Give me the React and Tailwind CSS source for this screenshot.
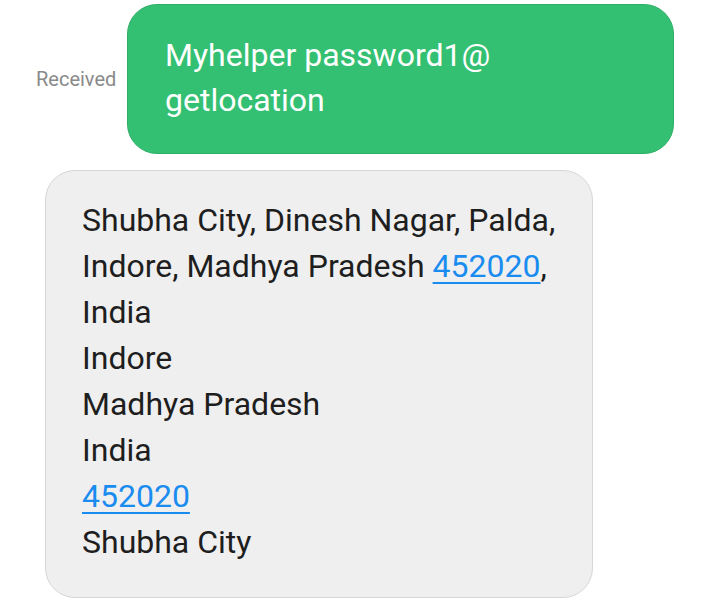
export default function App() {
    const lines = ['India', 'Indore', 'Madhya Pradesh', 'India'];

    return (
        <div className="w-[720px] h-[605px] bg-white overflow-hidden font-['Roboto',sans-serif]">
            {/* Incoming command */}
            <div className="flex items-center pt-[4px]">
                <span className="w-[127px] pl-[36px] text-[20px] text-[#8a8a8a] pb-[1px]">Received</span>
                <div className="w-[547px] h-[150px] rounded-[30px] bg-[#34c072] border border-[#2fae68] pl-[37px] pr-[30px] pt-[28px] text-[32px] leading-[45px] text-white">
                    Myhelper password1@
                    <br />
                    getlocation
                </div>
            </div>

            {/* Location reply */}
            <div className="pl-[45px] pt-[16px]">
                <div className="w-[548px] h-[428px] rounded-[30px] bg-[#efefef] border border-[#d6d6d6] pl-[36px] pr-[20px] pt-[26px] text-[32px] leading-[46px] text-[#1e1e1e]">
                    <div>Shubha City, Dinesh Nagar, Palda,</div>
                    <div>
                        Indore, Madhya Pradesh{' '}
                        <a href="#" className="text-[#1a8cf0] underline underline-offset-[5px] decoration-[2px]">452020</a>,
                    </div>
                    {lines.map((line, i) => (
                        <div key={i}>{line}</div>
                    ))}
                    <div>
                        <a href="#" className="text-[#1a8cf0] underline underline-offset-[5px] decoration-[2px]">452020</a>
                    </div>
                    <div>Shubha City</div>
                </div>
            </div>
        </div>
    );
}
